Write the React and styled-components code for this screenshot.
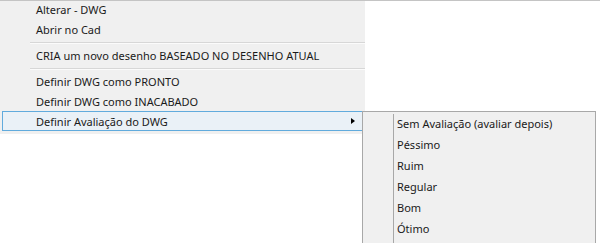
import React from "react";
import styled, { createGlobalStyle } from "styled-components";

const GlobalStyle = createGlobalStyle`
  html, body {
    margin: 0;
    padding: 0;
    background: #ffffff;
  }
  body {
    font-family: "Noto Sans", "Open Sans", sans-serif;
    font-size: 11px;
    color: #1a1a1a;
  }
`;

const Screen = styled.div`
  position: relative;
  width: 600px;
  height: 243px;
  overflow: hidden;
  background: #ffffff;
  border-top: 1px solid #c4c4c4;
  box-sizing: border-box;
`;

const Menu = styled.ul`
  list-style: none;
  margin: -2px 0 0 0;
  padding: 0 0 3px 0;
  width: 365px;
  background: #f0f0f0;
  box-sizing: border-box;
  position: relative;
`;

const Item = styled.li`
  position: relative;
  display: flex;
  align-items: center;
  height: 20px;
  margin: 0 2px;
  padding-left: 33px;
  box-sizing: border-box;
  border: 1px solid ${(p) => (p.$active ? "#61abdd" : "transparent")};
  background: ${(p) => (p.$active ? "#eaf1f7" : "transparent")};
  white-space: nowrap;
`;

const Separator = styled.li`
  height: 6px;
  margin-left: 30px;
  display: flex;
  align-items: center;
  &::before {
    content: "";
    flex: 1;
    height: 1px;
    background: #d7d7d7;
    box-shadow: 0 1px 0 #fbfbfb;
  }
`;

const Arrow = styled.span`
  position: absolute;
  right: 7px;
  top: 6px;
  width: 0;
  height: 0;
  border-top: 3.5px solid transparent;
  border-bottom: 3.5px solid transparent;
  border-left: 4px solid #000;
`;

const SubMenu = styled.ul`
  position: absolute;
  left: 362px;
  top: 110px;
  width: 234px;
  height: 150px;
  list-style: none;
  margin: 0;
  padding: 1px 0 3px;
  background: #f0f0f0;
  border: 1px solid #a8a8a8;
  box-sizing: border-box;
  &::before {
    content: "";
    position: absolute;
    left: 30px;
    top: 2px;
    bottom: 0;
    width: 1px;
    background: #a8a8a8;
  }
`;

const SubItem = styled.li`
  display: flex;
  align-items: center;
  height: 21px;
  padding-left: 34px;
  white-space: nowrap;
`;

export default function App() {
  const ratings = [
    "Sem Avaliação (avaliar depois)",
    "Péssimo",
    "Ruim",
    "Regular",
    "Bom",
    "Ótimo",
  ];

  return (
    <>
      <GlobalStyle />
      <Screen>
        <Menu>
          <Item>Alterar - DWG</Item>
          <Item>Abrir no Cad</Item>
          <Separator />
          <Item>CRIA um novo desenho BASEADO NO DESENHO ATUAL</Item>
          <Separator />
          <Item>Definir DWG como PRONTO</Item>
          <Item>Definir DWG como INACABADO</Item>
          <Item $active>
            Definir Avaliação do DWG
            <Arrow />
          </Item>
        </Menu>
        <SubMenu>
          {ratings.map((r) => (
            <SubItem key={r}>{r}</SubItem>
          ))}
        </SubMenu>
      </Screen>
    </>
  );
}
